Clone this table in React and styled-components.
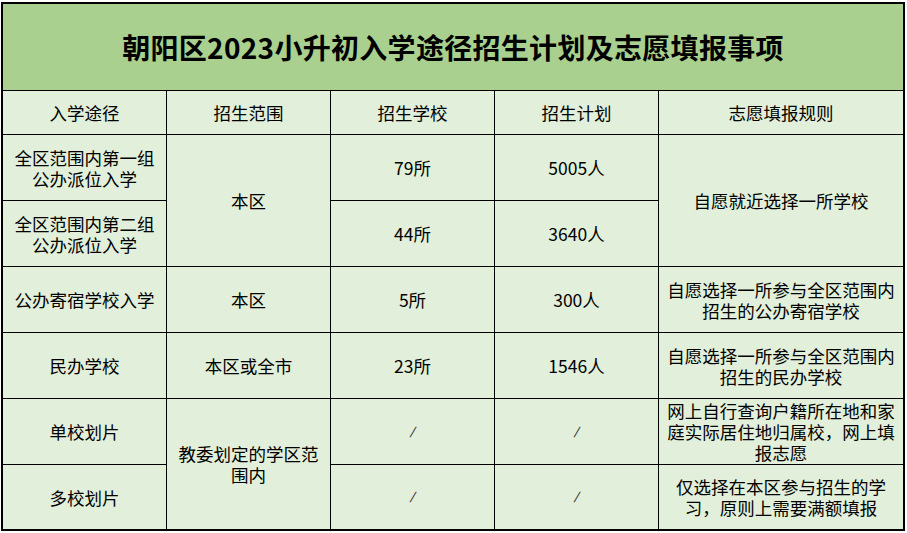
import React from "react";
import styled, { createGlobalStyle } from "styled-components";

const GlobalStyle = createGlobalStyle`
  html, body {
    margin: 0;
    padding: 0;
    background: #ffffff;
  }
  body {
    font-family: "Noto Sans CJK SC", "Noto Sans", sans-serif;
    color: #000;
  }
`;

const headers = ["入学途径", "招生范围", "招生学校", "招生计划", "志愿填报规则"];

const App = () => {
  return (
    <>
      <GlobalStyle />
      <Page>
        <Sheet>
          <Title>朝阳区2023小升初入学途径招生计划及志愿填报事项</Title>

          {headers.map((h) => (
            <Cell key={h}>{h}</Cell>
          ))}

          <Cell>全区范围内第一组公办派位入学</Cell>
          <Cell $rows={2}>本区</Cell>
          <Cell>79所</Cell>
          <Cell>5005人</Cell>
          <Cell $rows={2}>自愿就近选择一所学校</Cell>

          <Cell>全区范围内第二组公办派位入学</Cell>
          <Cell>44所</Cell>
          <Cell>3640人</Cell>

          <Cell>公办寄宿学校入学</Cell>
          <Cell>本区</Cell>
          <Cell>5所</Cell>
          <Cell>300人</Cell>
          <Cell>自愿选择一所参与全区范围内招生的公办寄宿学校</Cell>

          <Cell>民办学校</Cell>
          <Cell>本区或全市</Cell>
          <Cell>23所</Cell>
          <Cell>1546人</Cell>
          <Cell>自愿选择一所参与全区范围内招生的民办学校</Cell>

          <Cell>单校划片</Cell>
          <Cell $rows={2}>教委划定的学区范围内</Cell>
          <Cell><Slash>/</Slash></Cell>
          <Cell><Slash>/</Slash></Cell>
          <Cell>网上自行查询户籍所在地和家庭实际居住地归属校，网上填报志愿</Cell>

          <Cell>多校划片</Cell>
          <Cell><Slash>/</Slash></Cell>
          <Cell><Slash>/</Slash></Cell>
          <Cell>仅选择在本区参与招生的学习，原则上需要满额填报</Cell>
        </Sheet>
      </Page>
    </>
  );
};

export default App;

const Page = styled.div`
  padding: 2px 0 0 1px;
`;

const Sheet = styled.div`
  display: grid;
  grid-template-columns: 163px 163px 163px 163px 244px;
  grid-template-rows: 86px 43px 65px 65px 65px 65px 65px 64px;
  gap: 1px;
  width: 900px;
  border: 2px solid #000;
  background: #000;
`;

const Title = styled.div`
  grid-column: 1 / -1;
  display: flex;
  align-items: center;
  justify-content: center;
  background: #a9d08e;
  font-size: 28px;
  font-weight: 700;
  letter-spacing: 0.3px;
`;

const Cell = styled.div`
  grid-row: span ${({ $rows }) => $rows || 1};
  display: flex;
  align-items: center;
  justify-content: center;
  padding: 0 6px;
  background: #e2efda;
  font-size: 17.5px;
  line-height: 21px;
  text-align: center;
`;

const Slash = styled.span`
  display: inline-block;
  font-family: "Liberation Sans", sans-serif;
  font-size: 14px;
  line-height: 14px;
  color: #333;
  transform: skewX(-18deg);
`;
